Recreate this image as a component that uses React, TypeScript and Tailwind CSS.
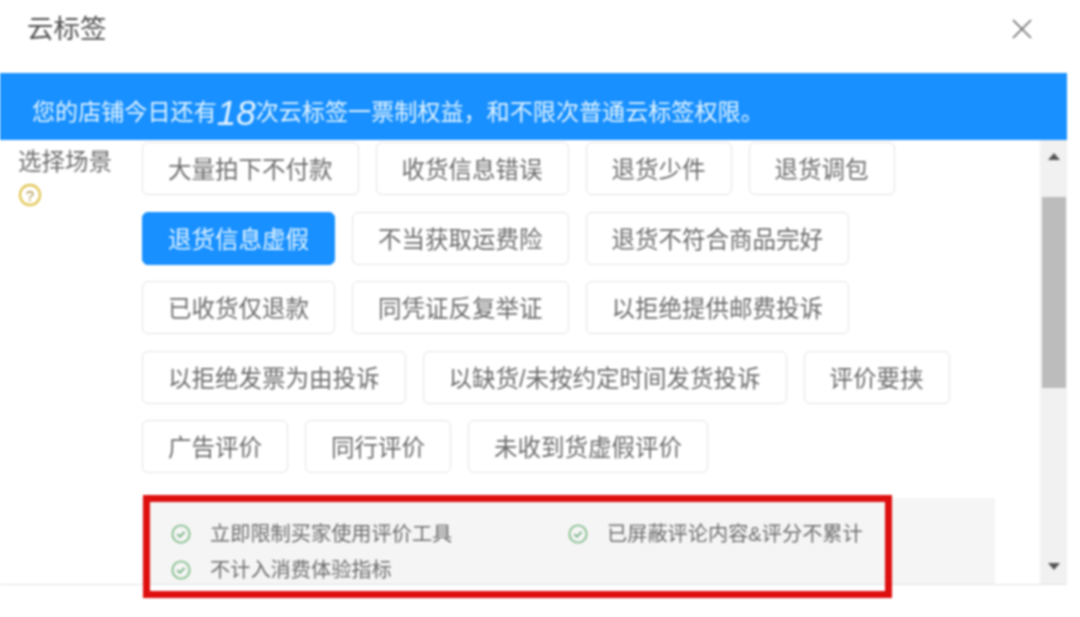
import React from 'react';

const rows = [
  '大量拍下不付款',
  '收货信息错误',
  '退货少件',
  '退货调包',
  '退货信息虚假',
  '不当获取运费险',
  '退货不符合商品完好',
  '已收货仅退款',
  '同凭证反复举证',
  '以拒绝提供邮费投诉',
  '以拒绝发票为由投诉',
  '以缺货/未按约定时间发货投诉',
  '评价要挟',
  '广告评价',
  '同行评价',
  '未收到货虚假评价',
];

const CheckIcon = () => (
  <svg width="20" height="20" viewBox="0 0 20 20" fill="none" className="shrink-0">
    <circle cx="10" cy="10" r="8.6" stroke="#86bf8f" strokeWidth="1.9" />
    <path d="M6.3 10.2l2.6 2.6 4.6-5" stroke="#76b081" strokeWidth="1.8" />
  </svg>
);

export default function App() {
  return (
    <div className="relative h-[617px] w-[1080px] overflow-hidden bg-white font-['Liberation_Sans','Noto_Sans_CJK_SC',sans-serif] blur-[0.8px]">
      <div className="w-[1067px]">
        <div className="flex h-[73px] items-start justify-between pt-[16px] pr-[34px] pl-[27px]">
          <h1 className="text-[26.5px] leading-[27px] text-[#505050]">云标签</h1>
          <svg width="22" height="22" viewBox="0 0 22 22" fill="none" className="mt-[2px]">
            <path d="M2 2l18 18M20 2L2 20" stroke="#707070" strokeWidth="1.7" />
          </svg>
        </div>

        <div className="flex h-[67px] items-center bg-[#1890ff] pt-[12px] pl-[32px] text-[23.1px] leading-none text-[#e4f4ff]">
          您的店铺今日还有<span className="text-[35px] leading-none italic">18</span>次云标签一票制权益，和不限次普通云标签权限。
        </div>

        <div className="relative flex h-[445px] border-b border-[#e2e2e2]">
          <div className="w-[142px] shrink-0 pt-[8px] pl-[18px]">
            <div className="text-[23.5px] leading-[28px] text-[#6c6c6c]">选择场景</div>
            <svg width="24" height="24" viewBox="0 0 24 24" fill="none" className="mt-[7px]">
              <circle cx="12" cy="12" r="10" stroke="#e3c95c" strokeWidth="2.4" />
              <text x="12" y="17.5" textAnchor="middle" fontSize="15" fill="#a8903c">?</text>
            </svg>
          </div>

          <div className="w-[853px] pt-[2px]">
            <div className="flex flex-wrap gap-x-[17px] gap-y-[16.5px]">
              {rows.map((label) => {
                const active = label === '退货信息虚假';
                return (
                  <div
                    key={label}
                    className={
                      active
                        ? 'flex h-[53px] items-center rounded-[6px] border border-[#1890ff] bg-[#1890ff] px-[25px] pt-[5px] text-[23.5px] text-[#e4f4ff]'
                        : 'flex h-[53px] items-center rounded-[6px] border border-[#e4e4e4] bg-white px-[25px] pt-[5px] text-[23.5px] text-[#6c6c6c]'
                    }
                  >
                    {label}
                  </div>
                );
              })}
            </div>

            <div className="mt-[25px] grid h-[86px] grid-cols-[397px_1fr] content-start bg-[#f5f5f5] pt-[18px] pl-[29px] text-[20.2px] leading-[36px] text-[#6c6c6c]">
              <div className="flex items-center gap-[19px]"><CheckIcon />立即限制买家使用评价工具</div>
              <div className="flex items-center gap-[19px]"><CheckIcon />已屏蔽评论内容&amp;评分不累计</div>
              <div className="flex items-center gap-[19px]"><CheckIcon />不计入消费体验指标</div>
            </div>
          </div>

          <div className="ml-auto flex w-[27px] flex-col items-center bg-[#f1f1f1]">
            <div className="flex h-[57px] w-full items-start justify-center pt-[13px]">
              <div className="h-0 w-0 border-x-[6px] border-b-[7px] border-x-transparent border-b-[#555]" />
            </div>
            <div className="h-[191px] w-[24px] bg-[#bcbcbc]" />
            <div className="mt-auto mb-[14px] h-0 w-0 border-x-[6px] border-t-[7px] border-x-transparent border-t-[#555]" />
          </div>

          <div className="absolute top-[355px] left-[143px] h-[103px] w-[749px] border-[7px] border-[#dd0f0f]" />
        </div>
      </div>
    </div>
  );
}
